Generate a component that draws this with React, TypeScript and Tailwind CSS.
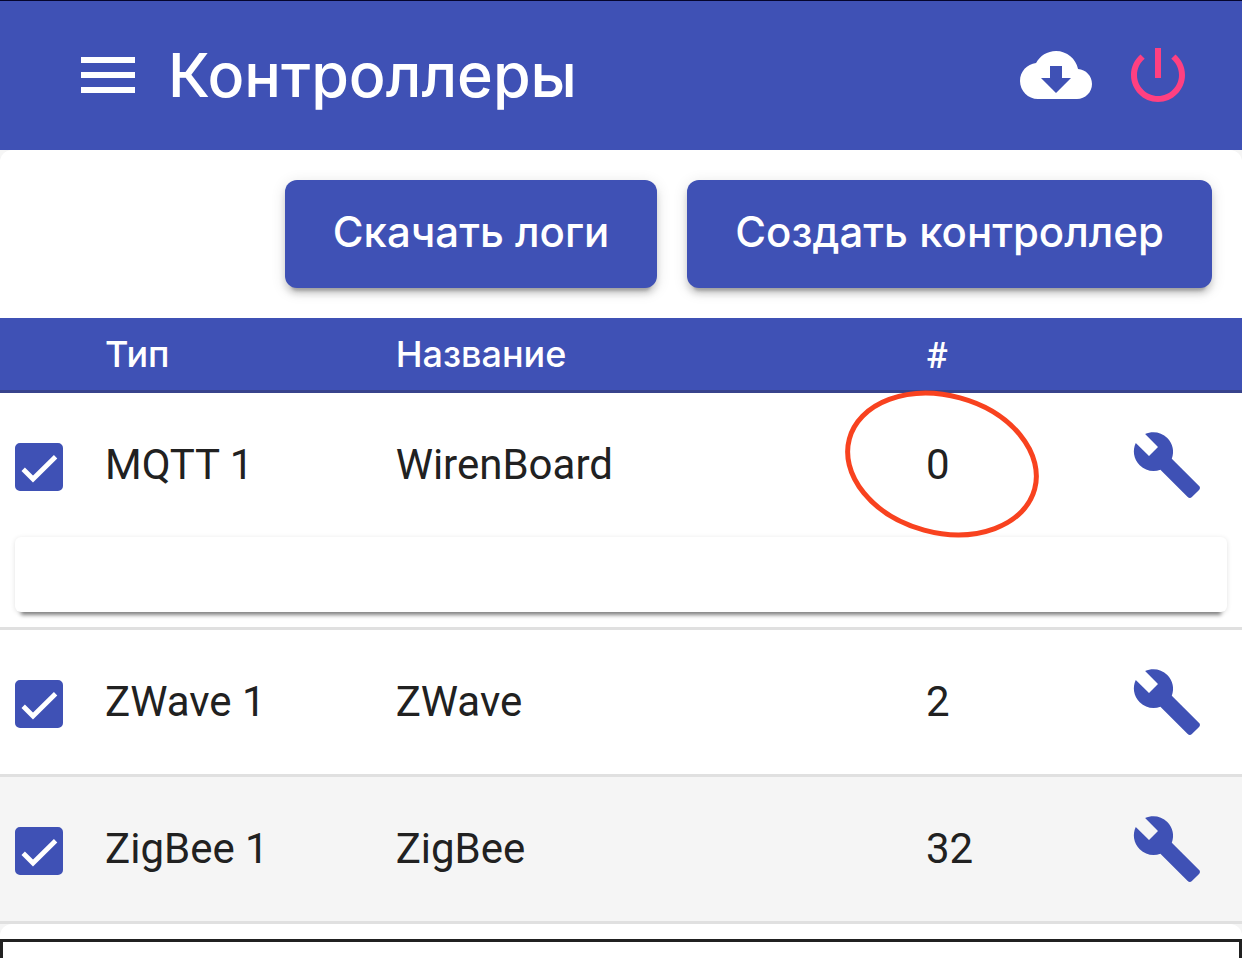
import { Fragment } from "react";

type Controller = {
  id: string;
  type: string;
  name: string;
  count: number;
  expanded?: boolean;
  highlighted?: boolean;
  circled?: boolean;
};

const controllers: Controller[] = [
  { id: "mqtt", type: "MQTT 1", name: "WirenBoard", count: 0, expanded: true, circled: true },
  { id: "zwave", type: "ZWave 1", name: "ZWave", count: 2 },
  { id: "zigbee", type: "ZigBee 1", name: "ZigBee", count: 32, highlighted: true },
];

function Icon({ path }: { path: string }) {
  return (
    <svg viewBox="0 0 24 24" className="block size-[72px] fill-current" aria-hidden="true">
      <path d={path} />
    </svg>
  );
}

const MENU = "M3 18h18v-2H3v2zm0-5h18v-2H3v2zm0-7v2h18V6H3z";
const CLOUD =
  "M19.35 10.04C18.67 6.59 15.64 4 12 4 9.11 4 6.6 5.64 5.35 8.04 2.34 8.36 0 10.91 0 14c0 3.31 2.69 6 6 6h13c2.76 0 5-2.24 5-5 0-2.64-2.05-4.78-4.65-4.96zM17 13l-5 5-5-5h3V9h4v4h3z";
const POWER =
  "M13 3h-2v10h2V3zm4.83 2.17l-1.42 1.42C17.99 7.86 19 9.81 19 12c0 3.87-3.13 7-7 7s-7-3.13-7-7c0-2.19 1.01-4.14 2.58-5.42L6.17 5.17C4.23 6.82 3 9.26 3 12c0 4.97 4.03 9 9 9s9-4.03 9-9c0-2.74-1.23-5.18-3.17-6.83z";
const WRENCH =
  "M22.7 19l-9.1-9.1c.9-2.3.4-5-1.5-6.9-2-2-5-2.4-7.4-1.3L9 6 6 9 1.6 4.7C.4 7.1.9 10.1 2.9 12.1c1.9 1.9 4.6 2.4 6.9 1.5l9.1 9.1c.4.4 1 .4 1.4 0l2.3-2.3c.5-.4.5-1.1.1-1.4z";

const raised =
  "h-[108px] rounded-xl bg-[#3f51b5] px-12 pb-1.5 text-[42px] font-medium whitespace-nowrap text-white shadow-[0_9px_3px_-6px_rgba(0,0,0,0.2),0_6px_6px_rgba(0,0,0,0.14),0_3px_15px_rgba(0,0,0,0.12)]";

function Checkbox({ label }: { label: string }) {
  return (
    <label className="relative mt-1 block size-12">
      <input
        type="checkbox"
        defaultChecked
        aria-label={label}
        className="peer block size-12 appearance-none rounded-[5px] border-[6px] border-[#757575] checked:border-[#3f51b5] checked:bg-[#3f51b5]"
      />
      <svg
        viewBox="0 0 24 24"
        className="pointer-events-none absolute inset-0 hidden size-12 fill-none stroke-white stroke-[2.4] peer-checked:block"
        aria-hidden="true"
      >
        <path d="M4.1 13.1 9 18 20.3 6.9" />
      </svg>
    </label>
  );
}

function Annotation() {
  return (
    <svg
      viewBox="0 0 200 152"
      className="pointer-events-none absolute -top-[52px] -left-[84px] z-10 h-[152px] w-[200px] fill-none stroke-[#f8421f] stroke-5"
      aria-hidden="true"
    >
      <ellipse cx="100" cy="76" rx="96" ry="68.5" transform="rotate(15.2 100 76)" />
    </svg>
  );
}

export default function App() {
  return (
    <div className="flex h-screen flex-col overflow-hidden bg-[#f5f5f5] font-['Inter',sans-serif] text-[#212121]">
      <header className="flex h-[150px] shrink-0 items-center bg-[#3f51b5] pr-12 pl-[72px] text-white shadow-[inset_0_1px_0_#05052d]">
        <button type="button" aria-label="Меню">
          <Icon path={MENU} />
        </button>
        <h1 className="ml-6 flex-1 text-[61px] leading-[72px] font-medium">Контроллеры</h1>
        <button type="button" aria-label="Скачать" className="mr-[30px]">
          <Icon path={CLOUD} />
        </button>
        <button type="button" aria-label="Выход" className="text-[#ff4081]">
          <Icon path={POWER} />
        </button>
      </header>

      <main className="shrink-0 rounded-t-xl bg-white">
        <div className="flex justify-end gap-[30px] p-[30px]">
          <button type="button" className={raised}>Скачать логи</button>
          <button type="button" className={raised}>Создать контроллер</button>
        </div>

        <table className="relative w-full table-fixed border-collapse text-left">
          <colgroup>
            <col className="w-[90px]" />
            <col className="w-[23.4%]" />
            <col />
            <col className="w-[205px]" />
            <col className="w-[126px]" />
          </colgroup>
          <thead>
            <tr className="h-[75px] bg-[#3f51b5] text-[36px] leading-[48px] text-white shadow-[inset_0_-3px_0_#38438c]">
              <th className="p-0" aria-label="Включён" />
              <th className="px-[15px] pt-0 pb-[3px] font-medium">Тип</th>
              <th className="px-[15px] pt-0 pb-[3px] font-medium">Название</th>
              <th className="px-[15px] py-0 font-['Roboto',sans-serif] font-medium">#</th>
              <th className="p-0" aria-label="Настройка" />
            </tr>
          </thead>
          <tbody className="font-['Roboto',sans-serif] text-[42px] leading-[48px]">
            {controllers.map((c) => (
              <Fragment key={c.id}>
                <tr
                  className={
                    c.expanded
                      ? "h-36 *:px-[15px] *:py-0"
                      : c.highlighted
                        ? "h-[147px] bg-[#f5f5f5] shadow-[inset_0_-3px_0_#e0e0e0] *:px-[15px] *:pt-0 *:pb-[3px]"
                        : "h-[147px] shadow-[inset_0_-3px_0_#e0e0e0] *:px-[15px] *:pt-0 *:pb-[3px]"
                  }
                >
                  <td>
                    <Checkbox label={c.type} />
                  </td>
                  <td>{c.type}</td>
                  <td>{c.name}</td>
                  <td>
                    <span className="relative">
                      {c.count}
                      {c.circled && <Annotation />}
                    </span>
                  </td>
                  <td>
                    <button type="button" aria-label={`Настроить ${c.name}`} className="block text-[#3f51b5]">
                      <Icon path={WRENCH} />
                    </button>
                  </td>
                </tr>
                {c.expanded && (
                  <tr className="shadow-[inset_0_-3px_0_#e0e0e0]">
                    <td colSpan={5} className="px-[15px] pt-0 pb-[18px]">
                      <div className="h-[75px] rounded-md bg-white shadow-[0_9px_4px_-6px_rgba(0,0,0,0.45),0_1px_5px_rgba(0,0,0,0.12)]" />
                    </td>
                  </tr>
                )}
              </Fragment>
            ))}
          </tbody>
        </table>
      </main>

      <section className="flex flex-1 flex-col rounded-t-xl bg-white pt-[15px]">
        <div className="flex-1 border-x-3 border-t-3 border-[#212121]" />
      </section>
    </div>
  );
}
